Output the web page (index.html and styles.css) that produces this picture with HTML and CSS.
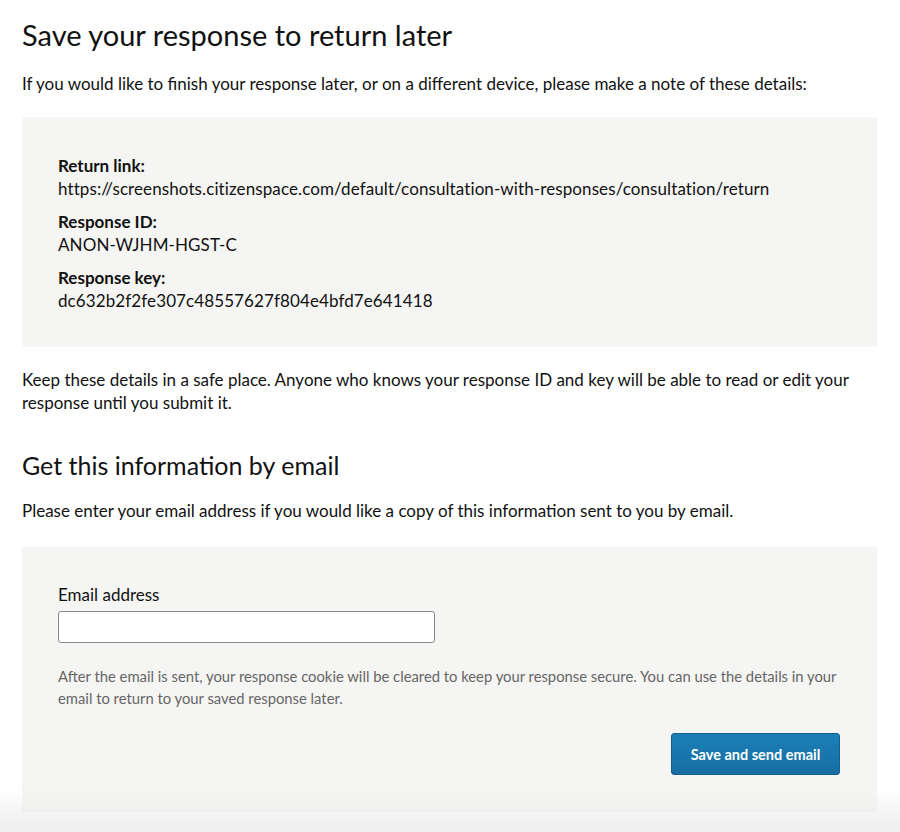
FILE: index.html
```html
<!DOCTYPE html>
<html lang="en">
<head>
<meta charset="utf-8">
<title>Save your response to return later</title>
<link rel="stylesheet" href="styles.css">
</head>
<body>
<main class="page">
  <h1 class="title">Save your response to return later</h1>
  <p class="intro">If you would like to finish your response later, or on a different device, please make a note of these details:</p>
  <section class="panel details">
    <dl class="detail-list">
      <dt>Return link:</dt>
      <dd>https://screenshots.citizenspace.com/default/consultation-with-responses/consultation/return</dd>
      <dt>Response ID:</dt>
      <dd>ANON-WJHM-HGST-C</dd>
      <dt>Response key:</dt>
      <dd>dc632b2f2fe307c48557627f804e4bfd7e641418</dd>
    </dl>
  </section>
  <p class="keep">Keep these details in a safe place. Anyone who knows your response ID and key will be able to read or edit your response until you submit it.</p>
  <h2 class="subtitle">Get this information by email</h2>
  <p class="intro-email">Please enter your email address if you would like a copy of this information sent to you by email.</p>
  <form class="panel email-form">
    <label class="label" for="email">Email address</label>
    <input class="input" id="email" type="email">
    <p class="help">After the email is sent, your response cookie will be cleared to keep your response secure. You can use the details in your email to return to your saved response later.</p>
    <div class="actions">
      <button class="button" type="button">Save and send email</button>
    </div>
  </form>
</main>
<div class="fade"></div>
</body>
</html>
```

FILE: styles.css
```css
html, body {
  margin: 0;
  padding: 0;
  background: #ffffff;
}
body {
  font-family: Lato, "Open Sans", sans-serif;
  color: #111111;
  font-size: 17px;
  line-height: 23px;
}
.page {
  width: 855px;
  padding: 18px 0 0 22px;
}
.title {
  font-size: 29px;
  font-weight: 400;
  line-height: 34px;
  margin: 0 0 20px 0;
}
.intro {
  margin: 0 0 22px 0;
}
.panel {
  background: #f5f5f3;
  padding: 36px 36px;
}
.details {
  padding-top: 37px;
  padding-bottom: 35px;
}
.detail-list {
  margin: 0;
}
.detail-list dt {
  font-weight: 700;
}
.detail-list dd {
  margin: 0 0 10px 0;
  letter-spacing: 0.1px;
}
.detail-list dd:last-child {
  margin-bottom: 0;
}
.keep {
  margin: 21px 0 36px 0;
}
.subtitle {
  font-size: 25px;
  font-weight: 400;
  line-height: 30px;
  margin: 0 0 19px 0;
}
.intro-email {
  margin: 0 0 25px 0;
}
.email-form {
  display: flex;
  flex-direction: column;
  align-items: flex-start;
  padding-top: 36px;
  padding-bottom: 37px;
}
.label {
  display: block;
  margin-bottom: 5px;
}
.input {
  width: 377px;
  height: 32px;
  box-sizing: border-box;
  border: 1px solid #8a8a8a;
  border-radius: 3px;
  background: #fff;
  margin: 0;
}
.help {
  color: #666666;
  font-size: 14.8px;
  line-height: 22px;
  margin: 22px 0 0 0;
}
.actions {
  align-self: stretch;
  display: flex;
  justify-content: flex-end;
  margin-top: 24px;
}
.button {
  font-family: Lato, "Open Sans", sans-serif;
  font-weight: 700;
  font-size: 14.5px;
  color: #ffffff;
  background: linear-gradient(#1a7fb7, #176ea3);
  border: 1px solid #14608f;
  border-radius: 3px;
  width: 169px;
  height: 42px;
  margin-right: 1px;
}
.fade {
  position: fixed;
  left: 0;
  right: 0;
  bottom: 0;
  height: 44px;
  pointer-events: none;
  background: linear-gradient(rgba(235,235,235,0), rgba(235,235,235,0.5) 50%, rgba(235,235,235,0.8));
}
```
